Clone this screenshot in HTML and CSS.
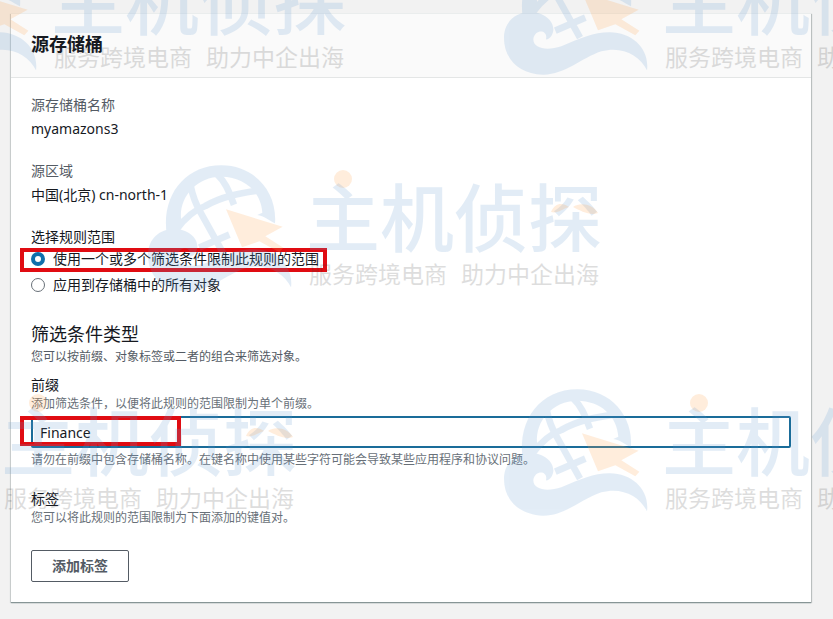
FILE: index.html
```html
<!DOCTYPE html>
<html lang="zh-CN">
<head>
	<meta charset="UTF-8">
	<meta name="viewport" content="width=device-width, initial-scale=1">
	<title>源存储桶</title>
	<link rel="stylesheet" href="styles.css">
</head>
<body>
	<main class="page">
		<section class="card">
			<header class="card-header">
				<h1>源存储桶</h1>
			</header>
			<div class="card-body">
				<dl class="info">
					<div>
						<dt>源存储桶名称</dt>
						<dd>myamazons3</dd>
					</div>
					<div>
						<dt>源区域</dt>
						<dd>中国(北京) cn-north-1</dd>
					</div>
				</dl>

				<fieldset class="scope">
					<legend>选择规则范围</legend>
					<label class="option marked">
						<input type="radio" name="scope" checked>
						<span>使用一个或多个筛选条件限制此规则的范围</span>
					</label>
					<label class="option">
						<input type="radio" name="scope">
						<span>应用到存储桶中的所有对象</span>
					</label>
				</fieldset>

				<h2>筛选条件类型</h2>
				<p class="desc">您可以按前缀、对象标签或二者的组合来筛选对象。</p>

				<div class="field">
					<label for="prefix">前缀</label>
					<p class="hint">添加筛选条件，以便将此规则的范围限制为单个前缀。</p>
					<div class="control">
						<input id="prefix" type="text" value="Finance">
					</div>
					<p class="hint">请勿在前缀中包含存储桶名称。在键名称中使用某些字符可能会导致某些应用程序和协议问题。</p>
				</div>

				<div class="tags">
					<h3>标签</h3>
					<p class="hint">您可以将此规则的范围限制为下面添加的键值对。</p>
					<button type="button">添加标签</button>
				</div>
			</div>
		</section>
	</main>

	<!-- 水印 -->
	<div class="watermarks" aria-hidden="true">
		<svg class="mark m1" viewBox="0 0 464 140">
			<g id="mark">
				<svg width="160" height="136" viewBox="0 0 480 408">
					<g class="blue">
						<path d="M74 222C58 105 130 16 238 16C338 16 406 96 399 190C382 182 366 168 346 165L361 158C357 96 309 51 238 50C163 50 112 112 117 174C118 190 112 207 103 211C90 211 82 216 74 222Z"/>
						<path class="line" d="M146 78C152 108 162 134 176 158L246 284M226 44C254 70 262 100 276 134M104 208C130 172 158 150 190 138C240 110 290 100 348 92M172 263L262 224"/>
						<path d="M18 285C18 235 55 207 95 207C140 207 168 235 166 262C164 281 150 291 144 289C151 258 110 258 106 288C105 319 150 323 190 310C250 285 285 268 335 268C405 268 455 320 447 382C425 335 370 308 310 325C250 345 200 396 135 395C60 392 18 345 18 285Z"/>
					</g>
					<path class="orange" d="M252 148L422 200L370 229L424 263L412 277L352 244L300 262Z"/>
				</svg>
				<circle class="orange" cx="201" cy="19" r="9"/>
				<text class="blue brand" x="164" y="86">主机侦探</text>
				<path class="orange" d="M409 52C413 43 420 42 427 47C420 49 416 54 409 52ZM431 47C438 42 451 44 456 53C448 56 439 51 431 47Z"/>
				<text class="grey slogan" x="167" y="123">服务跨境电商</text>
				<text class="grey slogan" x="319" y="123">助力中企出海</text>
			</g>
		</svg>
		<svg class="mark m2" viewBox="0 0 464 140"><use href="#mark"/></svg>
		<svg class="mark m3" viewBox="0 0 464 140"><use href="#mark"/></svg>
		<svg class="mark m4" viewBox="0 0 464 140"><use href="#mark"/></svg>
		<svg class="mark m5" viewBox="0 0 464 140"><use href="#mark"/></svg>
	</div>
</body>
</html>
```

FILE: styles.css
```css
*, *::before, *::after{
	box-sizing: border-box;
	margin: 0;
	padding: 0;
}
body{
	position: relative;
	min-height: 100vh;
	background: #f2f2f2;
	color: #16191f;
	font-family: "Noto Sans", "Noto Sans CJK SC", sans-serif;
	font-size: 14px;
	line-height: 22px;
}
.page{
	padding: 13px 22px 16px 11px;
}
.card{
	background: #fff;
	box-shadow: 0 1px 1px 0 #879596, 1px 1px 1px 0 #c4c8c8, -1px 1px 1px 0 #d5d8d8;
}
.card-header{
	padding: 19px 20px 22px;
	background: #fafafa;
	border-top: 1px solid #eaeded;
	border-bottom: 1px solid #e4e6e6;
}
h1{
	font-size: 18px;
	line-height: 22px;
	font-weight: 700;
}
.card-body{
	padding: 16px 20px 20px;
}
.info{
	display: flex;
	flex-direction: column;
	gap: 20px;
	margin-bottom: 20px;
}
.info dt{
	color: #545b64;
	margin-bottom: 2px;
}
.scope{
	border: none;
	margin-bottom: 22px;
}
.scope legend{
	display: block;
}
.option{
	display: flex;
	align-items: center;
	gap: 8px;
	width: fit-content;
	margin-bottom: 4px;
	position: relative;
}
.option input{
	appearance: none;
	width: 14px;
	height: 14px;
	border: 1px solid #687078;
	border-radius: 50%;
	background: #fff;
}
.option input:checked{
	border: 4px solid #0f6fab;
}
/*红色标注框*/
.marked::after,
.control::after{
	content: "";
	position: absolute;
	border: 4px solid #e00c12;
	pointer-events: none;
}
.marked::after{
	top: 0;
	bottom: -2px;
	left: -11px;
	right: -8px;
}
h2{
	font-size: 18px;
	line-height: 24px;
	font-weight: 400;
}
.desc{
	font-size: 12px;
	color: #545b64;
	margin-bottom: 6px;
}
.field{
	margin-bottom: 20px;
}
.field label{
	display: block;
}
.hint{
	font-size: 12px;
	line-height: 16px;
	color: #687078;
}
.control{
	position: relative;
	margin: 4px 0;
}
.control input{
	display: block;
	width: 100%;
	height: 32px;
	padding: 0 7px;
	border: 2px solid #1a6c99;
	border-radius: 2px;
	background: #fff;
	color: #16191f;
	font: inherit;
	outline: none;
}
.control::after{
	top: 0;
	left: -11px;
	width: 161px;
	height: 30px;
}
h3{
	font-size: 14px;
	font-weight: 400;
}
.tags button{
	display: block;
	height: 32px;
	margin-top: 24px;
	padding: 0 20px;
	border: 1px solid #545b64;
	border-radius: 2px;
	background: #fff;
	color: #545b64;
	font: inherit;
	font-weight: 700;
}

/*水印*/
.watermarks{
	position: absolute;
	top: 0;
	right: 0;
	bottom: 0;
	left: 0;
	overflow: hidden;
	pointer-events: none;
}
.mark{
	position: absolute;
	width: 464px;
	height: 140px;
}
.m1{
	left: -113px;
	top: -57px;
}
.m2{
	left: 498px;
	top: -57px;
}
.m3{
	left: 142px;
	top: 160px;
}
.m4{
	left: -163px;
	top: 384px;
}
.m5{
	left: 498px;
	top: 384px;
}
.blue{
	fill: #649bd2;
	opacity: .18;
}
.line{
	fill: none;
	stroke: #649bd2;
	stroke-width: 20;
}
.orange{
	fill: #ffa550;
	opacity: .2;
}
.grey{
	fill: #3c3c3c;
	opacity: .17;
}
.brand{
	font-size: 74px;
	font-weight: 500;
	font-family: "Noto Sans CJK SC", sans-serif;
}
.slogan{
	font-size: 23px;
	font-family: "Noto Sans CJK SC", sans-serif;
}
```
